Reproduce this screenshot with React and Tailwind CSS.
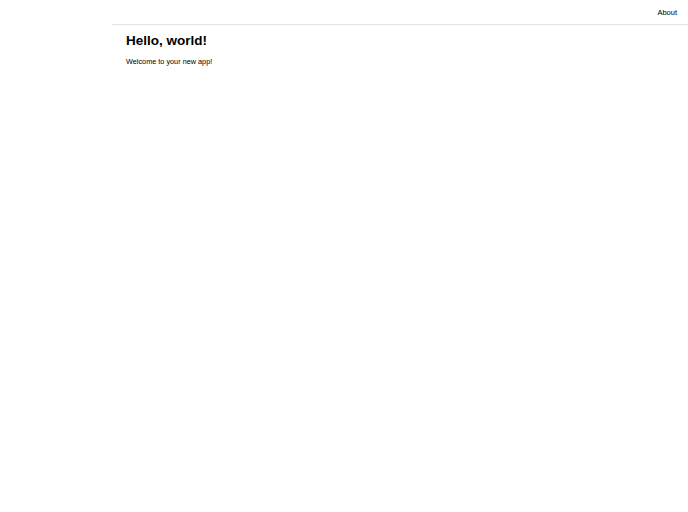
export default function App() {
  return (
    <div className="flex min-h-[512px] bg-white text-black" style={{ fontFamily: '"Liberation Sans", Arial, sans-serif' }}>
      <div className="w-[112px] shrink-0 bg-white" />
      <main className="flex-1">
        <div className="h-[25px] flex items-center justify-end border-b border-[#e3e3e3] pr-[11px] pt-[2px]">
          <a className="text-[7.5px] text-black">About</a>
        </div>
        <article className="px-[14px] pt-[8px]">
          <h1 className="text-[13.5px] font-bold leading-[16px] mb-[7px]">Hello, world!</h1>
          <p className="text-[7.3px] leading-[11px]">Welcome to your new app!</p>
        </article>
      </main>
    </div>
  );
}
